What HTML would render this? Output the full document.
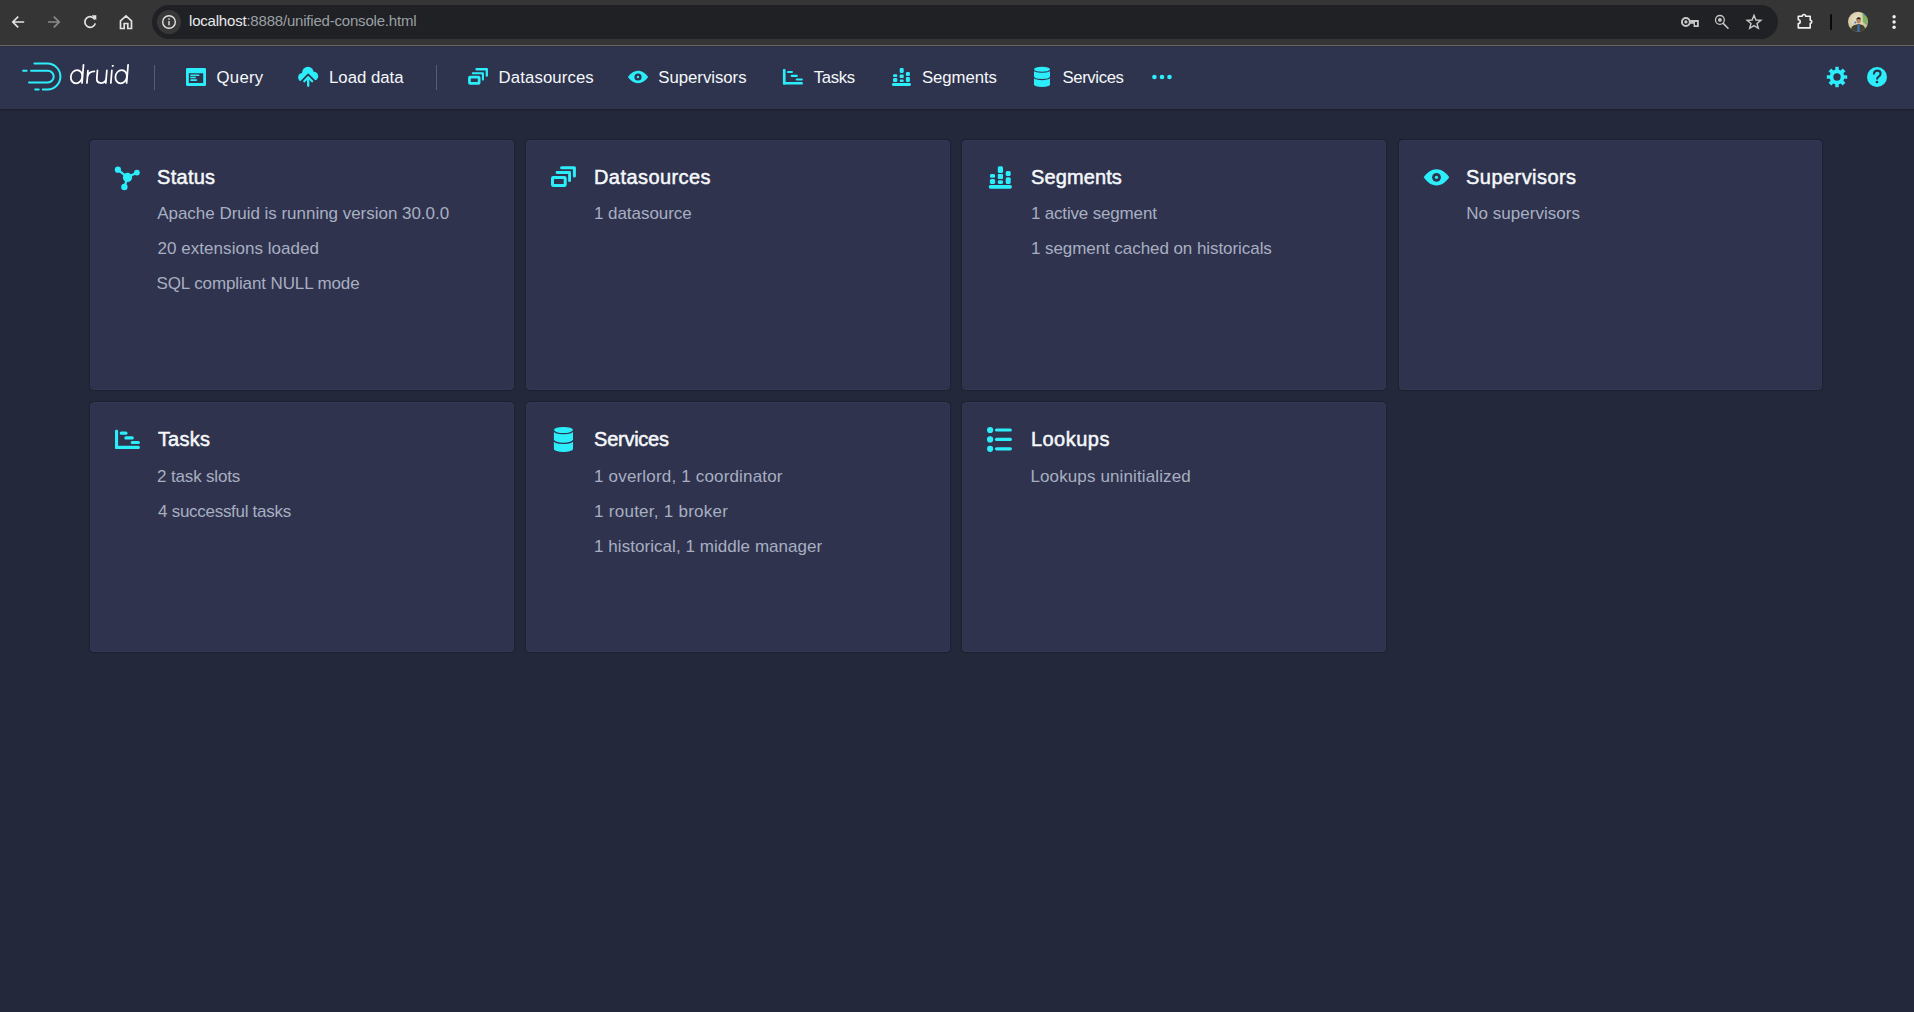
<!DOCTYPE html>
<html><head><meta charset="utf-8">
<style>
html,body{margin:0;padding:0;width:1914px;height:1012px;overflow:hidden;background:#24283b;font-family:"Liberation Sans",sans-serif;}
.a{position:absolute;white-space:nowrap;}
#chrome{position:absolute;left:0;top:0;width:1914px;height:45px;background:#353535;}
#chromeline{position:absolute;left:0;top:45px;width:1914px;height:1px;background:#686868;}
#url{position:absolute;left:152px;top:5px;width:1626px;height:34px;border-radius:17px;background:#202124;}
#infobg{position:absolute;left:157px;top:10px;width:24px;height:24px;border-radius:12px;background:#383838;}
#header{position:absolute;left:0;top:46px;width:1914px;height:63px;background:#2f344e;box-shadow:0 1px 0 rgba(16,18,30,.25), 0 2px 1px rgba(16,18,30,.25), inset 0 1px 0 rgba(16,18,30,.18);}
.sep{position:absolute;width:1px;top:65px;height:25px;background:#585c71;}
.card{position:absolute;width:424px;height:250px;background:#2f334d;border-radius:4px;box-shadow:0 0 0 1px rgba(16,18,30,.28), 0 0 2px rgba(16,18,30,.2), inset 0 0 0 1px rgba(255,255,255,.025);}
svg{position:absolute;overflow:visible;}
.cy{fill:#2ceefb;}
</style></head><body>
<div id="chrome"></div>
<div id="url"></div>
<div id="infobg"></div>
<div id="header"></div>
<div id="chromeline"></div>
<div class="sep" style="left:154px"></div>
<div class="sep" style="left:436px"></div>
<div class="card" style="left:90px;top:140px"></div>
<div class="card" style="left:526px;top:140px"></div>
<div class="card" style="left:962px;top:140px"></div>
<div class="card" style="left:1399px;top:140px;width:423px"></div>
<div class="card" style="left:90px;top:402px"></div>
<div class="card" style="left:526px;top:402px"></div>
<div class="card" style="left:962px;top:402px"></div>
<div style="position:absolute;left:189px;top:12px;font-size:15px;line-height:18px;color:#9aa0a6;white-space:nowrap;letter-spacing:-0.2px"><span style="color:#e8eaed">localhost</span>:8888/unified-console.html</div>
<div class="a" style="left:216.60px;top:68.00px;font-size:16.75px;line-height:20px;font-weight:normal;color:#f5f8fa;letter-spacing:0.250px;">Query</div>
<div class="a" style="left:329.00px;top:68.00px;font-size:16.75px;line-height:20px;font-weight:normal;color:#f5f8fa;letter-spacing:0.000px;">Load data</div>
<div class="a" style="left:498.60px;top:68.00px;font-size:16.75px;line-height:20px;font-weight:normal;color:#f5f8fa;letter-spacing:0.110px;">Datasources</div>
<div class="a" style="left:658.30px;top:68.00px;font-size:16.75px;line-height:20px;font-weight:normal;color:#f5f8fa;letter-spacing:-0.020px;">Supervisors</div>
<div class="a" style="left:813.70px;top:68.00px;font-size:16.75px;line-height:20px;font-weight:normal;color:#f5f8fa;letter-spacing:-0.325px;">Tasks</div>
<div class="a" style="left:922.00px;top:68.00px;font-size:16.75px;line-height:20px;font-weight:normal;color:#f5f8fa;letter-spacing:-0.071px;">Segments</div>
<div class="a" style="left:1062.50px;top:68.00px;font-size:16.75px;line-height:20px;font-weight:normal;color:#f5f8fa;letter-spacing:-0.400px;">Services</div>
<div class="a" style="left:157.10px;top:165.00px;font-size:20px;line-height:25px;font-weight:normal;color:#f5f8fa;letter-spacing:0.260px;-webkit-text-stroke:0.5px #f5f8fa;">Status</div>
<div class="a" style="left:594.00px;top:165.00px;font-size:20px;line-height:25px;font-weight:normal;color:#f5f8fa;letter-spacing:0.430px;-webkit-text-stroke:0.5px #f5f8fa;">Datasources</div>
<div class="a" style="left:1031.00px;top:165.00px;font-size:20px;line-height:25px;font-weight:normal;color:#f5f8fa;letter-spacing:0.114px;-webkit-text-stroke:0.5px #f5f8fa;">Segments</div>
<div class="a" style="left:1466.10px;top:165.00px;font-size:20px;line-height:25px;font-weight:normal;color:#f5f8fa;letter-spacing:0.440px;-webkit-text-stroke:0.5px #f5f8fa;">Supervisors</div>
<div class="a" style="left:157.90px;top:427.00px;font-size:20px;line-height:25px;font-weight:normal;color:#f5f8fa;letter-spacing:0.225px;-webkit-text-stroke:0.5px #f5f8fa;">Tasks</div>
<div class="a" style="left:594.10px;top:427.00px;font-size:20px;line-height:25px;font-weight:normal;color:#f5f8fa;letter-spacing:-0.271px;-webkit-text-stroke:0.5px #f5f8fa;">Services</div>
<div class="a" style="left:1030.90px;top:427.00px;font-size:20px;line-height:25px;font-weight:normal;color:#f5f8fa;letter-spacing:0.483px;-webkit-text-stroke:0.5px #f5f8fa;">Lookups</div>
<div class="a" style="left:157.20px;top:203.00px;font-size:17px;line-height:21px;font-weight:normal;color:#a8afc2;letter-spacing:-0.027px;">Apache Druid is running version 30.0.0</div>
<div class="a" style="left:157.50px;top:238.00px;font-size:17px;line-height:21px;font-weight:normal;color:#a8afc2;letter-spacing:0.047px;">20 extensions loaded</div>
<div class="a" style="left:156.50px;top:273.00px;font-size:17px;line-height:21px;font-weight:normal;color:#a8afc2;letter-spacing:-0.114px;">SQL compliant NULL mode</div>
<div class="a" style="left:594.00px;top:203.00px;font-size:17px;line-height:21px;font-weight:normal;color:#a8afc2;letter-spacing:-0.055px;">1 datasource</div>
<div class="a" style="left:1030.90px;top:203.00px;font-size:17px;line-height:21px;font-weight:normal;color:#a8afc2;letter-spacing:-0.167px;">1 active segment</div>
<div class="a" style="left:1030.90px;top:238.00px;font-size:17px;line-height:21px;font-weight:normal;color:#a8afc2;letter-spacing:-0.063px;">1 segment cached on historicals</div>
<div class="a" style="left:1466.30px;top:203.00px;font-size:17px;line-height:21px;font-weight:normal;color:#a8afc2;letter-spacing:0.023px;">No supervisors</div>
<div class="a" style="left:157.10px;top:466.00px;font-size:17px;line-height:21px;font-weight:normal;color:#a8afc2;letter-spacing:-0.164px;">2 task slots</div>
<div class="a" style="left:158.10px;top:501.00px;font-size:17px;line-height:21px;font-weight:normal;color:#a8afc2;letter-spacing:-0.288px;">4 successful tasks</div>
<div class="a" style="left:594.10px;top:466.00px;font-size:17px;line-height:21px;font-weight:normal;color:#a8afc2;letter-spacing:0.171px;">1 overlord, 1 coordinator</div>
<div class="a" style="left:594.10px;top:501.00px;font-size:17px;line-height:21px;font-weight:normal;color:#a8afc2;letter-spacing:0.259px;">1 router, 1 broker</div>
<div class="a" style="left:594.10px;top:536.00px;font-size:17px;line-height:21px;font-weight:normal;color:#a8afc2;letter-spacing:0.048px;">1 historical, 1 middle manager</div>
<div class="a" style="left:1030.40px;top:466.00px;font-size:17px;line-height:21px;font-weight:normal;color:#a8afc2;letter-spacing:0.125px;">Lookups uninitialized</div>
<svg style="left:0;top:0" width="1914" height="1012" viewBox="0 0 1914 1012">
<!-- chrome nav icons -->
<g fill="none" stroke="#e3e3e3" stroke-width="1.7">
  <path d="M24.2 22H13.2M18.2 16.6L12.8 22L18.2 27.4"/>
  <path d="M48 22H59M53.8 16.6L59.2 22L53.8 27.4" stroke="#8a8a8a"/>
  <path d="M94.9 19.6A5.3 5.3 0 1 0 95.3 23.4"/>
  <path d="M120.5 28.5V20.8L126 15.8L131.5 20.8V28.5H127.8V23.5H124.2V28.5Z" stroke-linejoin="miter"/>
</g>
<path d="M91.6 15.3H96.3V20Z" fill="#e3e3e3"/>
<!-- info -->
<circle cx="169" cy="22" r="6.3" fill="none" stroke="#e3e3e3" stroke-width="1.4"/>
<rect x="168.3" y="21" width="1.4" height="4.3" fill="#e3e3e3"/>
<rect x="168.3" y="18.3" width="1.4" height="1.5" fill="#e3e3e3"/>
<!-- key -->
<g fill="#c7c7c7">
  <path fill-rule="evenodd" d="M1685.9 17A4.95 4.95 0 1 1 1685.9 26.9A4.95 4.95 0 1 1 1685.9 17ZM1685.9 19A2.95 2.95 0 1 0 1685.9 24.9A2.95 2.95 0 1 0 1685.9 19Z"/>
  <circle cx="1685.9" cy="21.95" r="1.6"/>
  <path d="M1690.2 20.1H1698.8V26.9H1693.6V23.8H1690.2Z"/>
</g>
<path d="M1695 22H1697V25.3H1695Z" fill="#1f2023"/>
<!-- zoom -->
<g fill="none" stroke="#c7c7c7">
  <circle cx="1719.9" cy="19.9" r="4.4" stroke-width="1.3"/>
  <path d="M1723.2 23.4L1728 28.2" stroke-width="1.6" stroke-linecap="round"/>
</g>
<circle cx="1719.9" cy="19.9" r="1.9" fill="#c7c7c7"/>
<!-- star -->
<path d="M1754 15.3L1755.9 20L1760.9 20.3L1757 23.5L1758.3 28.3L1754 25.6L1749.7 28.3L1751 23.5L1747.1 20.3L1752.1 20Z" fill="none" stroke="#c7c7c7" stroke-width="1.4" stroke-linejoin="miter"/>
<!-- puzzle -->
<path d="M1798.3 16.2H1802.2A1.7 1.7 0 0 1 1805.6 16.2H1810.2V20.2A1.6 1.6 0 0 1 1810.2 23.4V27.9H1798.3V23.6A1.9 1.9 0 0 0 1798.3 19.8Z" fill="none" stroke="#f1f1f1" stroke-width="1.6" stroke-linejoin="round"/>
<rect x="1830" y="14.2" width="2" height="15.6" fill="#0a0a0a"/>
<!-- avatar -->
<defs>
  <radialGradient id="av" cx="0.45" cy="0.35" r="0.7">
    <stop offset="0" stop-color="#e8e0c8"/>
    <stop offset="0.6" stop-color="#d8cda8"/>
    <stop offset="1" stop-color="#b9b08a"/>
  </radialGradient>
  <clipPath id="avc"><circle cx="1858" cy="21.8" r="10"/></clipPath>
</defs>
<circle cx="1858" cy="21.8" r="10" fill="url(#av)"/>
<g clip-path="url(#avc)">
  <path d="M1862.5 12.5Q1867 14 1868.5 19L1866.5 25L1862.8 22Z" fill="#6fae52" opacity=".85"/>
  <circle cx="1864.8" cy="14.8" r="1.1" fill="#3c7fd0"/>
  <circle cx="1855.3" cy="22.6" r="1" fill="#3c7fd0"/>
  <path d="M1850.5 32Q1850.8 25.8 1854.6 24.9L1858.6 24L1862.4 25Q1865.2 26 1865.6 32Z" fill="#3f4033"/>
  <path d="M1857.6 24.6H1859.4L1859.8 32H1857.3Z" fill="#3a6fb0"/>
  <ellipse cx="1858.6" cy="20.6" rx="2.2" ry="2.8" fill="#b88466"/>
  <path d="M1856.3 19.6Q1856.5 17.2 1858.7 17.3Q1861 17.3 1860.9 19.6Q1859 18.6 1856.3 19.6Z" fill="#2b2622"/>
</g>
<g fill="#f1f1f1">
  <circle cx="1894.1" cy="16.7" r="1.7"/><circle cx="1894.1" cy="22" r="1.7"/><circle cx="1894.1" cy="27.3" r="1.7"/>
</g>

<!-- druid logo -->
<g fill="none" stroke="#2ceefb" stroke-width="2" stroke-linecap="round">
  <path d="M34.4 63.6H47.4A13 13 0 0 1 47.4 89.6H42.8"/>
  <path d="M35.2 89.6H38.7"/>
  <path d="M31 70.7H47.8A5.9 5.9 0 0 1 47.8 82.5H29"/>
  <path d="M23.1 70.7H26.6"/>
</g>
<g fill="none" stroke="#ffffff" stroke-width="1.75" stroke-linecap="round" transform="translate(0 83.4) skewX(-4.6) translate(0 -83.4)">
  <ellipse cx="76" cy="76.7" rx="5.7" ry="6.6"/>
  <path d="M82 64.8V82.9"/>
  <path d="M86.9 70.6V82.9M87 76.6Q87.6 71.4 93.4 71.3"/>
  <path d="M96.4 70.4V78.1Q96.4 83.1 101.1 83.1Q105.8 83.1 105.8 78.1V70.4M105.8 78V82.9"/>
  <path d="M110.8 70.4V82.9"/>
  <ellipse cx="120.6" cy="76.7" rx="5.7" ry="6.6"/>
  <path d="M126.6 64.8V82.9"/>
</g>
<rect x="110.4" y="64.9" width="1.9" height="1.9" fill="#fff" transform="translate(0 83.4) skewX(-4.6) translate(0 -83.4)"/>

<!-- header icons -->
<g class="cy">
  <!-- query / application -->
  <path fill-rule="evenodd" d="M187.2 68H204.8A1.2 1.2 0 0 1 206 69.2V84.8A1.2 1.2 0 0 1 204.8 86H187.2A1.2 1.2 0 0 1 186 84.8V69.2A1.2 1.2 0 0 1 187.2 68ZM188.8 73.3V83.1H203.2V73.3Z"/>
  <rect x="190.1" y="74.4" width="9.4" height="1.6" rx=".8"/>
  <rect x="190.1" y="76.8" width="5.9" height="1.5" rx=".75"/>
  <rect x="190.1" y="79.3" width="7.1" height="1.6" rx=".8"/>
  <!-- cloud upload -->
  <circle cx="302.5" cy="77.3" r="4.4"/>
  <circle cx="307.9" cy="72.6" r="5.8"/>
  <circle cx="313.8" cy="76.2" r="4.4"/>
  <rect x="302.5" y="73" width="11.3" height="7.5"/>
</g>
<path d="M308.2 73.2L319 84V90H297V84.4Z" fill="#2f344e"/>
<g fill="none" stroke="#2ceefb" stroke-width="2.3" stroke-linecap="round" stroke-linejoin="round">
  <path d="M304.3 81.2L308.2 77.3L312.1 81.2"/>
  <path d="M308.2 78V85.8"/>
</g>
<!-- datasources multi-select -->
<g fill="none" stroke="#2ceefb" stroke-linecap="round" stroke-linejoin="round">
  <rect x="469.45" y="77.1" width="9.7" height="6.2" rx=".6" stroke-width="2.7"/>
  <path d="M472.8 73.25H482.9V79.6" stroke-width="2.1"/>
  <path d="M476.5 69.25H486.8V75.7" stroke-width="2.3"/>
</g>
<g class="cy">
  <!-- eye -->
  <path d="M627.9 77C630.5 73.2 634 70.7 638 70.7C642 70.7 645.6 73.2 648.2 77C645.6 80.8 642 83.2 638 83.2C634 83.2 630.5 80.8 627.9 77Z"/>
</g>
<circle cx="638" cy="77" r="3.6" fill="#2f344e"/>
<circle cx="638" cy="77" r="1.2" fill="#2ceefb"/>
<g class="cy">
  <!-- tasks gantt -->
  <rect x="782.9" y="69.1" width="2.7" height="15.5" rx="1"/>
  <rect x="782.9" y="82" width="20" height="2.6" rx="1.2"/>
  <rect x="787" y="70.9" width="6" height="2.1" rx="1.05"/>
  <rect x="790.6" y="74.7" width="7.3" height="2.2" rx="1.1"/>
  <rect x="795.7" y="78.4" width="7.2" height="2.2" rx="1.1"/>
  <!-- segments stacked -->
  <rect x="891.9" y="83" width="19.1" height="2.9" rx="1.45"/>
  <rect x="893" y="74.2" width="4.3" height="2.7" rx="1.2"/>
  <rect x="893" y="78" width="4.3" height="3.9" rx="1.2"/>
  <rect x="899.7" y="67.9" width="4" height="5.1" rx="1.2"/>
  <rect x="899.7" y="74.5" width="4" height="3.6" rx=".6"/>
  <rect x="899.7" y="79.4" width="4" height="2.5" rx="1"/>
  <rect x="905.9" y="72" width="4" height="4" rx="1.2"/>
  <rect x="905.9" y="77.1" width="4" height="4.8" rx="1.2"/>
  <!-- database -->
  <path d="M1034 69.3A8 2.5 0 0 1 1050 69.3V84.6A8 2.5 0 0 1 1034 84.6Z"/>
  <!-- more -->
  <circle cx="1154.4" cy="77" r="2.3"/>
  <circle cx="1162" cy="77" r="2.3"/>
  <circle cx="1169.5" cy="77" r="2.3"/>
</g>
<g fill="none" stroke="#2f344e" stroke-width="1.1">
  <path d="M1034 69.7A8 2.5 0 0 0 1050 69.7"/>
  <path d="M1034 77.1A8 2.5 0 0 0 1050 77.1"/>
</g>
<!-- gear -->
<g class="cy" transform="translate(1837 77)">
  <circle r="7.4"/>
  <rect x="-1.7" y="-10.2" width="3.4" height="20.4"/>
  <rect x="-1.9" y="-10" width="3.8" height="20" transform="rotate(45)"/>
  <rect x="-1.7" y="-10.2" width="3.4" height="20.4" transform="rotate(90)"/>
  <rect x="-1.9" y="-10" width="3.8" height="20" transform="rotate(135)"/>
</g>
<circle cx="1837" cy="77" r="3.7" fill="#2f344e"/>
<!-- help -->
<circle cx="1877" cy="77" r="10" fill="#2ceefb"/>
<path d="M1873.9 73.6Q1874.4 70.6 1877.3 70.6Q1880.6 70.6 1880.6 73.6Q1880.6 75.5 1878.7 76.6Q1877.1 77.5 1877.1 78.8" fill="none" stroke="#2f344e" stroke-width="2.1" stroke-linecap="round"/>
<circle cx="1877" cy="82" r="1.35" fill="#2f344e"/>

<!-- card icons -->
<g class="cy">
  <!-- status graph -->
  <circle cx="117.9" cy="169.7" r="3.1"/>
  <circle cx="136.9" cy="172.6" r="2.9"/>
  <circle cx="124.4" cy="187" r="3.2"/>
  <circle cx="127.5" cy="177.4" r="4.6"/>
</g>
<g stroke="#2ceefb" stroke-width="2.3" fill="none">
  <path d="M117.9 169.7L127.5 177.4L136.9 172.6M127.5 177.4L124.4 187"/>
</g>
<!-- datasources card -->
<g fill="none" stroke="#2ceefb" stroke-linecap="round" stroke-linejoin="round">
  <rect x="552.5" y="177.4" width="12.7" height="8.1" rx=".8" stroke-width="3"/>
  <path d="M557.05 172.45H569.55V180.65" stroke-width="2.9"/>
  <path d="M561.6 167.7H574.4V176.1" stroke-width="3"/>
</g>
<g class="cy">
  <!-- segments card -->
  <rect x="988.7" y="185" width="23.2" height="3.7" rx="1.85"/>
  <rect x="989.9" y="173.9" width="5.2" height="3.9" rx="1.5"/>
  <rect x="989.9" y="179" width="5.2" height="5" rx="1.5"/>
  <rect x="997.8" y="166.2" width="5.2" height="6.7" rx="1.5"/>
  <rect x="997.8" y="174.1" width="5.2" height="4.9" rx=".7"/>
  <rect x="997.8" y="180.3" width="5.2" height="3.7" rx="1.4"/>
  <rect x="1005.7" y="170.9" width="5" height="5" rx="1.5"/>
  <rect x="1005.7" y="177.3" width="5" height="6.7" rx="1.5"/>
  <!-- eye card -->
  <path d="M1423.7 177.3C1427 172.4 1431.5 169.2 1436.5 169.2C1441.5 169.2 1446 172.4 1449.2 177.3C1446 182.2 1441.5 185.5 1436.5 185.5C1431.5 185.5 1427 182.2 1423.7 177.3Z"/>
</g>
<circle cx="1436.5" cy="177.3" r="4.4" fill="#2f334d"/>
<circle cx="1436.5" cy="177.3" r="1.6" fill="#2ceefb"/>
<g class="cy">
  <!-- tasks card -->
  <rect x="115" y="429.7" width="3.1" height="19.3" rx="1.2"/>
  <rect x="115" y="445.7" width="24.9" height="3.3" rx="1.5"/>
  <rect x="119.7" y="431.6" width="7.8" height="3.1" rx="1.5"/>
  <rect x="124.3" y="436.3" width="9.5" height="3.3" rx="1.6"/>
  <rect x="130.7" y="441" width="9.2" height="3.1" rx="1.5"/>
  <!-- services db card -->
  <path d="M553.9 430A9.55 3.1 0 0 1 573 430V448.9A9.55 3.1 0 0 1 553.9 448.9Z"/>
  <!-- lookups -->
  <circle cx="990.1" cy="430" r="3.1"/>
  <circle cx="990.1" cy="439.4" r="3.1"/>
  <circle cx="990.1" cy="448.8" r="3.1"/>
  <rect x="994.9" y="428.4" width="17" height="3.2" rx="1.6"/>
  <rect x="994.9" y="437.8" width="17" height="3.2" rx="1.6"/>
  <rect x="994.9" y="447.2" width="17" height="3.2" rx="1.6"/>
</g>
<g fill="none" stroke="#2f334d" stroke-width="1.2">
  <path d="M553.9 430.6A9.55 3.1 0 0 0 573 430.6"/>
  <path d="M553.9 440.2A9.55 3.1 0 0 0 573 440.2"/>
</g>
</svg>

</body></html>
